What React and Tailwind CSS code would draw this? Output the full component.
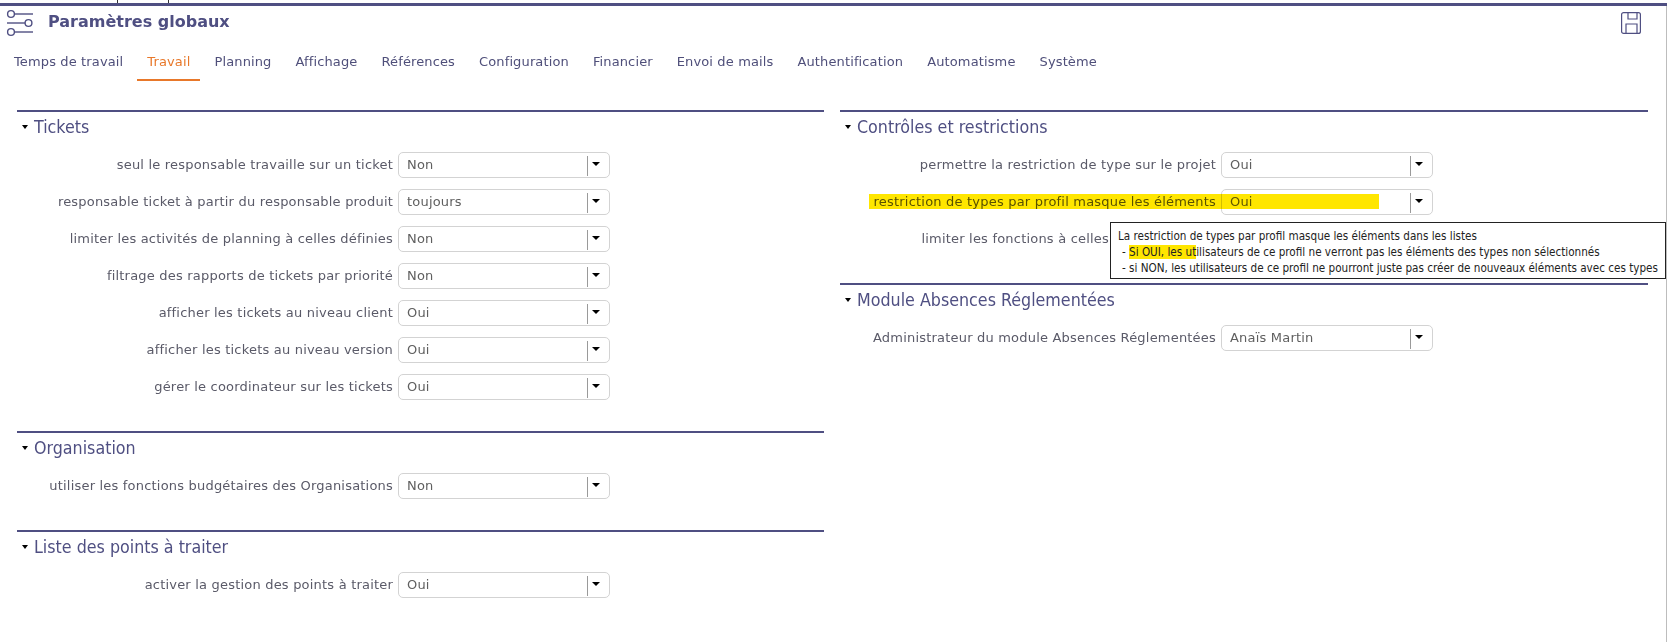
import React from 'react';

const tabs = ['Temps de travail', 'Travail', 'Planning', 'Affichage', 'Références', 'Configuration', 'Financier', 'Envoi de mails', 'Authentification', 'Automatisme', 'Système'];

const leftSections = [
  {
    title: 'Tickets',
    rows: [
      ['seul le responsable travaille sur un ticket', 'Non'],
      ['responsable ticket à partir du responsable produit', 'toujours'],
      ['limiter les activités de planning à celles définies', 'Non'],
      ['filtrage des rapports de tickets par priorité', 'Non'],
      ['afficher les tickets au niveau client', 'Oui'],
      ['afficher les tickets au niveau version', 'Oui'],
      ['gérer le coordinateur sur les tickets', 'Oui'],
    ],
  },
  { title: 'Organisation', rows: [['utiliser les fonctions budgétaires des Organisations', 'Non']] },
  { title: 'Liste des points à traiter', rows: [['activer la gestion des points à traiter', 'Oui']] },
];

const rightSections = [
  {
    title: 'Contrôles et restrictions',
    rows: [
      ['permettre la restriction de type sur le projet', 'Oui'],
      ['restriction de types par profil masque les éléments', 'Oui'],
      ['limiter les fonctions à celles du profil choisi.', 'Non'],
    ],
  },
  { title: 'Module Absences Réglementées', rows: [['Administrateur du module Absences Réglementées', 'Anaïs Martin']] },
];

function Row({ label, value, width }) {
  return (
    <div className="flex items-center h-[26px] mb-[11px]">
      <div style={{ width }} className="text-right pr-[5px] whitespace-nowrap text-[13px] tracking-[0.2px] text-[#5a5a68]">{label}</div>
      <div className="relative w-[212px] h-[26px] shrink-0 bg-white border border-[#d3d3d3] rounded-[5px] flex items-center">
        <span className="ml-[8px] text-[13px] tracking-[0.2px] text-[#5f5f5f] -mt-[1px]">{value}</span>
        <div className="absolute left-[188px] top-[3px] w-px h-[20px] bg-[#9a9a9a]" />
        <div className="absolute left-[193px] top-[9px] w-0 h-0 border-l-[4px] border-r-[4px] border-t-[4px] border-l-transparent border-r-transparent border-t-black" />
      </div>
    </div>
  );
}

function Section({ title, rows, width }) {
  return (
    <div className="border-t-2 border-[#4f4f82] mb-[31px]">
      <div className="h-[40px] pt-[3px] flex items-start">
        <div className="flex items-center h-[24px]">
          <div className="ml-[5px] mr-[6px] w-0 h-0 border-l-[3.5px] border-r-[3.5px] border-t-[4px] border-l-transparent border-r-transparent border-t-black" />
          <span className="text-[17.7px] text-[#4f4f82]" style={{ fontFamily: '"DejaVu Sans Condensed", "Open Sans", sans-serif' }}>{title}</span>
        </div>
      </div>
      {rows.map(([label, value]) => <Row key={label} label={label} value={value} width={width} />)}
    </div>
  );
}

export default function App() {
  return (
    <div className="relative w-[1667px] h-[642px] overflow-hidden bg-white" style={{ fontFamily: '"DejaVu Sans", Verdana, sans-serif' }}>
      <div className="flex h-[3px] pl-[117px]">
        <div className="w-px bg-[#333]" />
        <div className="w-px bg-[#333] ml-[50px]" />
      </div>
      <div className="h-[3px] bg-[#4f4f82]" />
      <div className="border-r border-[#bdbdbd] h-[636px]">
        <div className="flex items-center justify-between h-[36px] pl-[6px] pr-[25px]">
          <div className="flex items-center">
            <svg width="28" height="28" viewBox="0 0 28 28" fill="none" stroke="#4f4f82" strokeWidth="1.4" className="-mt-[3px]">
              <circle cx="5" cy="5" r="3.4" /><path d="M8.5 5H27" />
              <circle cx="22.5" cy="14" r="3.4" /><path d="M1 14H19" />
              <circle cx="5" cy="23" r="3.4" /><path d="M8.5 23H27" />
            </svg>
            <span className="ml-[14px] text-[16px] font-bold text-[#4f4f82] -mt-[4px]">Paramètres globaux</span>
          </div>
          <svg width="20" height="22" viewBox="0 0 20 22" fill="none" stroke="#4f4f82" strokeWidth="1.2" className="-mt-[2px]">
            <rect x="0.6" y="0.6" width="18.8" height="20.8" rx="2" />
            <path d="M7 1v6h9V1" /><path d="M5 21v-9h11v9" />
          </svg>
        </div>
        <div className="flex gap-[4px] pl-[4px] h-[37px] mt-[2px]">
          {tabs.map(t => (
            <div key={t} className={`h-[37px] px-[10px] pt-[8px] text-[13px] tracking-[0.13px] whitespace-nowrap border-b-2 ${t === 'Travail' ? 'text-[#e8782a] border-[#e8782a]' : 'text-[#4f4f7a] border-transparent'}`}>{t}</div>
          ))}
        </div>
        <div className="flex mt-[29px] pl-[17px]">
          <div className="w-[807px]">
            {leftSections.map(s => <Section key={s.title} {...s} width={381} />)}
          </div>
          <div className="w-[808px] ml-[16px]">
            {rightSections.map(s => <Section key={s.title} {...s} width={381} />)}
          </div>
        </div>
      </div>
      {/* marker strokes and the tooltip sit over the form */}
      <div className="absolute left-[869px] top-[194px] w-[510px] h-[15px] bg-[#ffe600] mix-blend-multiply" />
      <div className="absolute left-[1110px] top-[222px] w-[556px] h-[57px] bg-white border border-[#222] pl-[7px] pt-[5px] text-[11.6px] leading-[16px] text-[#222] whitespace-pre z-10" style={{ fontFamily: '"DejaVu Sans Condensed", "Open Sans", sans-serif' }}>
        <div>La restriction de types par profil masque les éléments dans les listes</div>
        <div className="pl-[4px]">{'- '}<span className="bg-[#ffe600]">Si OUI, les ut</span>ilisateurs de ce profil ne verront pas les éléments des types non sélectionnés</div>
        <div className="pl-[4px]">- si NON, les utilisateurs de ce profil ne pourront juste pas créer de nouveaux éléments avec ces types</div>
      </div>
    </div>
  );
}
